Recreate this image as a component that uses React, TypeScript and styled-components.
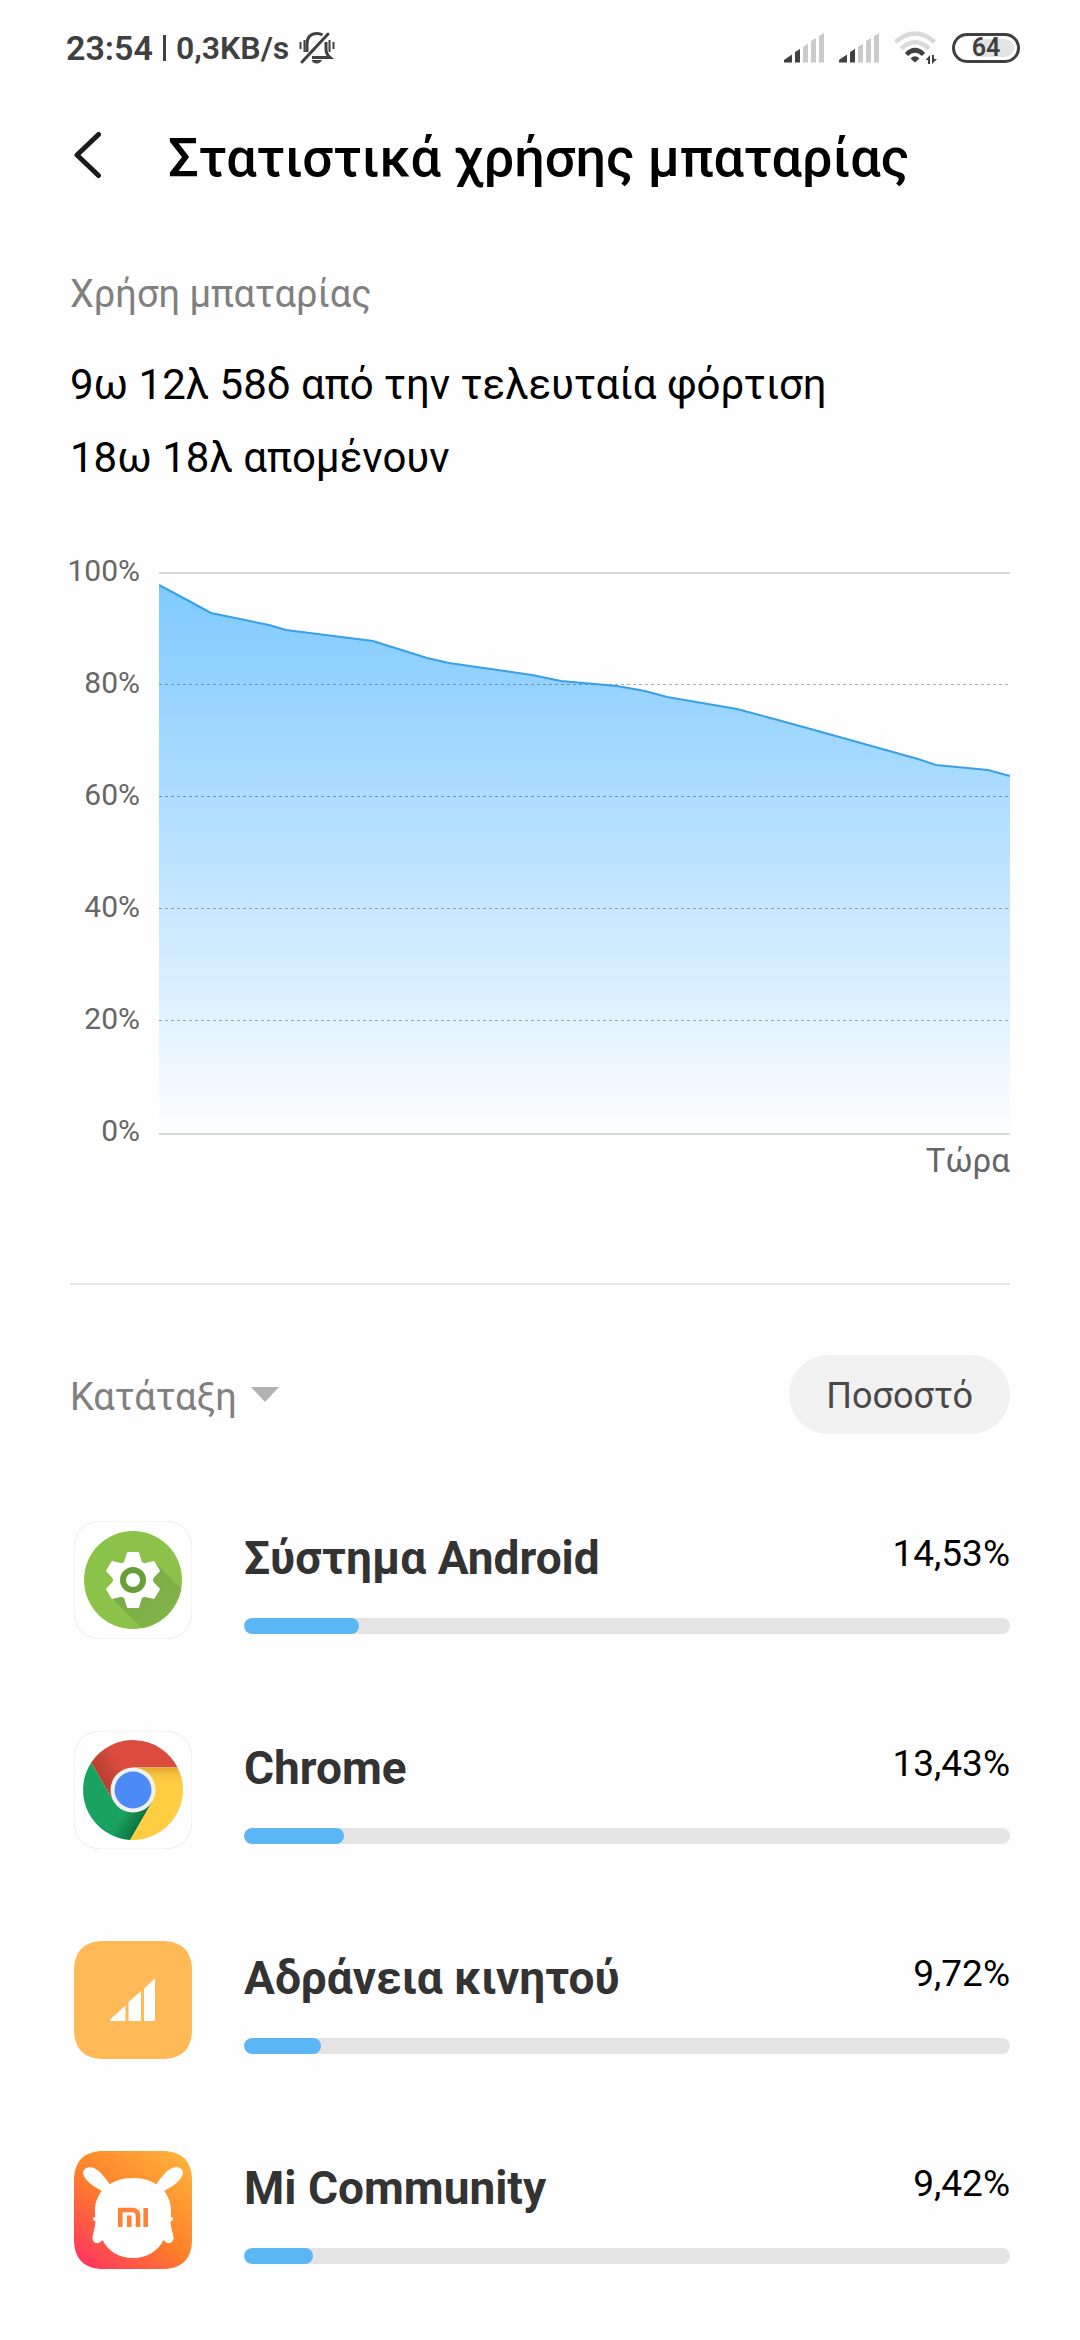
import React from 'react';
import styled, { createGlobalStyle } from 'styled-components';

const GlobalStyle = createGlobalStyle`
  * { box-sizing: border-box; }
  body {
    margin: 0;
    background: #fefefe;
    color: #000;
    font-family: Roboto, "Noto Sans", sans-serif;
  }
  h1, h2, h3, p, ul { margin: 0; padding: 0; font-weight: 400; }
  button, select { font-family: inherit; border: 0; padding: 0; background: none; cursor: pointer; }
`;

const Screen = styled.div`
  min-height: 100vh;
  padding-bottom: 24px;
`;

const StatusBar = styled.div`
  display: flex;
  align-items: center;
  justify-content: space-between;
  height: 96px;
  padding: 0 60px 0 66px;
  color: #404040;
`;

const StatusGroup = styled.div<{ $gap: number }>`
  display: flex;
  align-items: center;
  gap: ${(p) => p.$gap}px;
`;

const StatusText = styled.span<{ $size: number }>`
  font-size: ${(p) => p.$size}px;
  line-height: 40px;
  font-weight: 600;
`;

const StatusDivider = styled.span`
  width: 3px;
  height: 26px;
  background: #404040;
`;

const Battery = styled.span`
  display: flex;
  align-items: center;
  justify-content: center;
  width: 68px;
  height: 30px;
  padding: 3px;
  border: 3px solid #404040;
  border-radius: 15px;
  font-size: 25px;
  line-height: 24px;
  font-weight: 600;
`;

const BatteryCharge = styled.span`
  display: flex;
  align-items: center;
  justify-content: center;
  width: 100%;
  height: 18px;
  border-radius: 9px;
  background: linear-gradient(to right, transparent 18px, #e4e4e4 18px);
`;

const Header = styled.header`
  display: flex;
  align-items: center;
  height: 124px;
  padding: 0 70px;
`;

const BackButton = styled.button`
  display: flex;
  align-items: center;
  width: 98px;
  height: 80px;
`;

const Title = styled.h1`
  font-size: 54px;
  line-height: 64px;
  font-weight: 500;
`;

const Content = styled.main`
  padding: 48px 70px 0;
`;

const Caption = styled.h2`
  margin-bottom: 28px;
  font-size: 38px;
  line-height: 52px;
  color: #808080;
`;

const Summary = styled.p`
  font-size: 42px;
  line-height: 73px;
`;

const Chart = styled.section`
  display: grid;
  grid-template-columns: 70px 1fr;
  column-gap: 19px;
  margin-top: 57px;
`;

const AxisLabels = styled.div`
  display: flex;
  flex-direction: column;
  justify-content: space-between;
  align-items: flex-end;
  height: 600px;
  font-size: 30px;
  line-height: 40px;
  color: #666;
`;

const PlotColumn = styled.div`
  display: flex;
  flex-direction: column;
  padding-top: 21px;
`;

const Plot = styled.svg`
  display: block;
  width: 100%;
  height: 563px;
`;

const NowLabel = styled.span`
  align-self: flex-end;
  margin-top: 6px;
  font-size: 33px;
  line-height: 40px;
  color: #666;
`;

const Divider = styled.hr`
  height: 2px;
  margin: 102px 0 70px;
  border: 0;
  background: #e5e5e5;
`;

const Toolbar = styled.div`
  display: flex;
  align-items: center;
  justify-content: space-between;
  margin-bottom: 41px;
`;

const SortField = styled.label`
  display: flex;
  align-items: center;
  gap: 14px;
`;

const SortSelect = styled.select`
  appearance: none;
  padding-top: 4px;
  font-size: 38px;
  line-height: 52px;
  color: #808080;
`;

const ModeButton = styled.button`
  height: 79px;
  padding: 3px 37px 0;
  border-radius: 40px;
  background: #f1f1f1;
  color: #484848;
  font-size: 36px;
  line-height: 48px;
`;

const AppList = styled.ul`
  list-style: none;
`;

const AppRow = styled.li`
  display: flex;
  align-items: center;
  gap: 52px;
  padding: 46px 0 46px 4px;
`;

const AppIcon = styled.svg`
  display: block;
  flex: none;
  width: 118px;
  height: 118px;
`;

const AppBody = styled.div`
  flex: 1;
  min-width: 0;
`;

const AppLine = styled.div`
  display: flex;
  justify-content: space-between;
  align-items: flex-start;
  margin-bottom: 28px;
`;

const AppName = styled.h3`
  font-size: 46px;
  line-height: 64px;
  font-weight: 700;
  color: #333;
`;

const AppShare = styled.span`
  font-size: 37px;
  line-height: 56px;
`;

const Track = styled.div`
  height: 16px;
  border-radius: 8px;
  background: #e4e4e4;
  overflow: hidden;
`;

const Fill = styled.div`
  height: 100%;
  border-radius: 8px;
  background: #5bb6f5;
`;

function MutedBell() {
  return (
    <svg width="36" height="34" viewBox="0 0 36 34" fill="none" stroke="#404040" strokeWidth="3" aria-label="Σίγαση">
      <path d="M8 21V13C8 6 12 2.500 18 2.500C20.500 2.500 22 3 23.500 4" />
      <path d="M27 11V18C27 22 28.500 24.500 31 26.500H13" />
      <path d="M3 31L29 3" strokeLinecap="round" />
      <path d="M12.500 29H23C22 31.500 20 32.500 17.700 32.500C15.500 32.500 13.500 31.500 12.500 29Z" fill="#404040" stroke="none" />
      <path d="M1.500 11V18M5.500 9V21M30.500 9V21M34.500 11V18" strokeWidth="2" />
    </svg>
  );
}

function Signal() {
  return (
    <svg width="40" height="30" viewBox="0 0 40 30" aria-label="Σήμα">
      <path d="M0 29.500V27L8 21.500V29.500Z M11 29.500V19L16 16V29.500Z" fill="#404040" />
      <path d="M19 29.500V14L24 10.500V29.500Z M27 29.500V8L32 5V29.500Z M35 29.500V3L40 0V29.500Z" fill="#cacaca" />
    </svg>
  );
}

function Wifi() {
  return (
    <svg width="43" height="34" viewBox="0 0 43 34" fill="none" aria-label="Wi-Fi">
      <path d="M1.500 11Q21 -6 40.500 11" stroke="#dadada" strokeWidth="4.500" />
      <path d="M7 17.500Q21 5 35 17.500" stroke="#dadada" strokeWidth="4.500" />
      <path d="M12.500 23.500Q21 15 29.500 23.500" stroke="#404040" strokeWidth="4.500" />
      <path d="M21 31.500L16.500 27.500Q21 23 25.500 27.500Z" fill="#404040" />
      <path d="M36 33V24L31.500 29H34V33Z M38 24V33L43 28H40V24Z" fill="#404040" />
    </svg>
  );
}

// Battery level samples in plot units: x runs 0–851, y runs 0 (100%) to 563 (0%).
const samples: Array<[number, number]> = [
  [0, 13], [30, 29], [52, 41], [110, 53], [127, 58], [214, 69], [268, 86], [290, 91],
  [373, 103], [402, 109], [458, 114], [486, 119], [508, 125], [578, 137], [619, 148],
  [684, 166], [716, 175], [759, 187], [777, 193], [829, 198], [851, 204],
];
const gridLines = [112, 224, 336, 448];
const axis = ['100%', '80%', '60%', '40%', '20%', '0%'];

function BatteryPlot() {
  const line = samples.map(([x, y]) => `${x},${y}`).join(' ');
  return (
    <Plot viewBox="0 0 851 563" preserveAspectRatio="none" role="img" aria-label="Στάθμη μπαταρίας">
      <defs>
        <linearGradient id="level" gradientUnits="userSpaceOnUse" x1="0" y1="13" x2="0" y2="561">
          <stop offset="0" stopColor="#7fcaff" />
          <stop offset="0.5" stopColor="#bbe2ff" />
          <stop offset="1" stopColor="#fefefe" />
        </linearGradient>
      </defs>
      <path d="M0 1H851M0 562H851" stroke="#d8d8d8" strokeWidth="2" />
      <polygon points={`0,561 ${line} 851,561`} fill="url(#level)" />
      {gridLines.map((y) => (
        <path key={y} d={`M0 ${y + 0.5}H851`} stroke="#000" strokeOpacity="0.32" strokeWidth="1" strokeDasharray="3 3" />
      ))}
      <polyline points={line} fill="none" stroke="#38a0e6" strokeWidth="2" />
    </Plot>
  );
}

const SQUIRCLE = 'M30 0H88C108 0 118 10 118 30V88C118 108 108 118 88 118H30C10 118 0 108 0 88V30C0 10 10 0 30 0Z';

function gearPath(cx: number, cy: number) {
  const at = (x: number, y: number, deg: number) => {
    const a = (deg * Math.PI) / 180;
    return `${(cx + x * Math.cos(a) - y * Math.sin(a)).toFixed(2)} ${(cy + x * Math.sin(a) + y * Math.cos(a)).toFixed(2)}`;
  };
  let d = '';
  for (let i = 0; i < 6; i += 1) {
    const t = i * 60;
    d += `${i === 0 ? 'M' : 'L'}${at(-7.5, -21, t)}L${at(-5.5, -27.5, t)}L${at(5.5, -27.5, t)}L${at(7.5, -21, t)}`;
    d += `Q${at(0, -17, t + 30)} ${at(-7.5, -21, t + 60)}`;
  }
  return `${d}Z`;
}

function AndroidIcon() {
  return (
    <AppIcon viewBox="0 0 118 118" aria-hidden="true">
      <defs>
        <clipPath id="disc"><circle cx="59" cy="59" r="49" /></clipPath>
        <linearGradient id="cast" x1="0" y1="0" x2="1" y2="1">
          <stop offset="0" stopColor="#76a844" />
          <stop offset="1" stopColor="#86b94c" />
        </linearGradient>
      </defs>
      <path d={SQUIRCLE} fill="#fff" stroke="#ececec" />
      <circle cx="59" cy="59" r="49" fill="#8bc34a" />
      <path d="M38 77L78 118H118V78L82 43Z" fill="url(#cast)" clipPath="url(#disc)" />
      <path d={gearPath(59, 59)} fill="#fff" stroke="#fff" strokeLinejoin="round" />
      <circle cx="59" cy="59" r="10" fill="#fff" stroke="#689f38" strokeWidth="6" />
    </AppIcon>
  );
}

function ChromeIcon() {
  return (
    <AppIcon viewBox="0 0 118 118" aria-hidden="true">
      <defs>
        <linearGradient id="red" gradientUnits="userSpaceOnUse" x1="27" y1="44" x2="46" y2="33">
          <stop offset="0" stopColor="#b9402f" />
          <stop offset="1" stopColor="#db4c3f" />
        </linearGradient>
        <linearGradient id="yellow" gradientUnits="userSpaceOnUse" x1="0" y1="36" x2="0" y2="54">
          <stop offset="0" stopColor="#e0a932" />
          <stop offset="0.5" stopColor="#f8c63e" />
          <stop offset="1" stopColor="#ffcd42" />
        </linearGradient>
        <linearGradient id="green" gradientUnits="userSpaceOnUse" x1="68" y1="90" x2="50" y2="80">
          <stop offset="0" stopColor="#0c7340" />
          <stop offset="1" stopColor="#1aa260" />
        </linearGradient>
      </defs>
      <path d={SQUIRCLE} fill="#fff" stroke="#ececec" />
      <path d="M103.600 36.500A50 50 0 0 0 17.200 31.600L39.500 70.250L59 59L59 36.500Z" fill="url(#red)" />
      <path d="M17.200 31.600A50 50 0 0 0 56.200 108.900L78.500 70.250L59 59L39.500 70.250Z" fill="url(#green)" />
      <path d="M56.200 108.900A50 50 0 0 0 103.600 36.500H59V59L78.500 70.250Z" fill="url(#yellow)" />
      <circle cx="59" cy="59" r="22.500" fill="#f1f1f1" />
      <circle cx="59" cy="59" r="18.500" fill="#4c8bf5" />
    </AppIcon>
  );
}

function CellIcon() {
  return (
    <AppIcon viewBox="0 0 118 118" aria-hidden="true">
      <path d={SQUIRCLE} fill="#ffb957" />
      <path
        d="M36 80V78.500L51.500 64.500V80Z M54.500 80V61L67 50V80Z M70 80V47.500L81 37.500V80Z"
        fill="#fff"
      />
    </AppIcon>
  );
}

function CommunityIcon() {
  return (
    <AppIcon viewBox="0 0 118 118" aria-hidden="true">
      <defs>
        <linearGradient id="sunset" x1="0.05" y1="1" x2="0.85" y2="0">
          <stop offset="0" stopColor="#ff2f63" />
          <stop offset="0.5" stopColor="#ff8029" />
          <stop offset="1" stopColor="#ffb03a" />
        </linearGradient>
      </defs>
      <path d={SQUIRCLE} fill="url(#sunset)" />
      <g fill="#fff">
        <path d="M28 40C20 36 10 29 9 22C9 17 15 15 20 17C26 20 31 26 36 34Z" />
        <path d="M90 40C98 36 108 29 109 22C109 17 103 15 98 17C92 20 87 26 82 34Z" />
        <path d="M59 27C81 27 97 40 97 60C97 66 96 70 97 75L99.500 86C100 93 93 94 89.500 89C84 100 73 107 59 107C45 107 34 100 28.500 89C25 94 18 93 18.500 86L21 75C22 70 21 66 21 60C21 40 37 27 59 27Z" />
        <rect x="19" y="66" width="4" height="4" rx="2" />
        <rect x="95" y="66" width="4" height="4" rx="2" />
      </g>
      <g fill="none" stroke="#ff8236" strokeWidth="4.600">
        <path d="M46.300 76V59H58C62 59 64 60.500 64 64.500V76" />
        <path d="M55.200 64.500V76M71.700 57V76" />
      </g>
    </AppIcon>
  );
}

const apps = [
  { name: 'Σύστημα Android', share: 14.53, Icon: AndroidIcon },
  { name: 'Chrome', share: 13.43, Icon: ChromeIcon },
  { name: 'Αδράνεια κινητού', share: 9.72, Icon: CellIcon },
  { name: 'Mi Community', share: 9.42, Icon: CommunityIcon },
];

export default function App() {
  return (
    <Screen>
      <GlobalStyle />
      <StatusBar>
        <StatusGroup $gap={10}>
          <StatusText $size={34}>23:54</StatusText>
          <StatusDivider />
          <StatusText $size={32}>0,3KB/s</StatusText>
          <MutedBell />
        </StatusGroup>
        <StatusGroup $gap={15}>
          <Signal />
          <Signal />
          <Wifi />
          <Battery><BatteryCharge>64</BatteryCharge></Battery>
        </StatusGroup>
      </StatusBar>
      <Header>
        <BackButton aria-label="Πίσω">
          <svg width="36" height="54" viewBox="0 0 36 54" fill="none" stroke="#1a1a1a" strokeWidth="5" strokeLinecap="round" strokeLinejoin="round">
            <path d="M28.500 3.500L7 24L28.500 44.500" />
          </svg>
        </BackButton>
        <Title>Στατιστικά χρήσης μπαταρίας</Title>
      </Header>
      <Content>
        <Caption>Χρήση μπαταρίας</Caption>
        <Summary>9ω 12λ 58δ από την τελευταία φόρτιση</Summary>
        <Summary>18ω 18λ απομένουν</Summary>
        <Chart>
          <AxisLabels>
            {axis.map((label) => <span key={label}>{label}</span>)}
          </AxisLabels>
          <PlotColumn>
            <BatteryPlot />
            <NowLabel>Τώρα</NowLabel>
          </PlotColumn>
        </Chart>
        <Divider />
        <Toolbar>
          <SortField>
            <SortSelect aria-label="Κατάταξη" defaultValue="rank">
              <option value="rank">Κατάταξη</option>
            </SortSelect>
            <svg width="28" height="16" viewBox="0 0 28 16" aria-hidden="true">
              <path d="M0 0H28L14 15Z" fill="#b2b2b2" />
            </svg>
          </SortField>
          <ModeButton>Ποσοστό</ModeButton>
        </Toolbar>
        <AppList>
          {apps.map(({ name, share, Icon }) => (
            <AppRow key={name}>
              <Icon />
              <AppBody>
                <AppLine>
                  <AppName>{name}</AppName>
                  <AppShare>{share.toFixed(2).replace('.', ',')}%</AppShare>
                </AppLine>
                <Track role="progressbar" aria-label={name} aria-valuenow={Math.round(share)}>
                  <Fill style={{ width: `${Math.round(share)}%` }} />
                </Track>
              </AppBody>
            </AppRow>
          ))}
        </AppList>
      </Content>
    </Screen>
  );
}
